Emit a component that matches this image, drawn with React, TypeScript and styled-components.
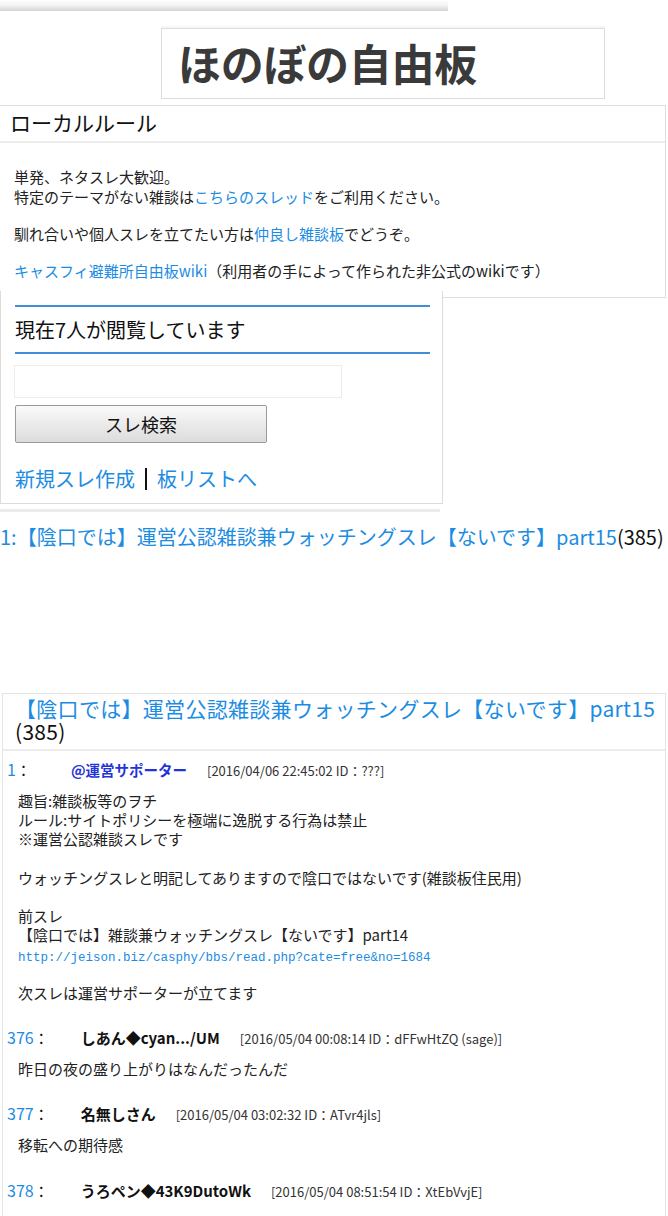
import React from "react";
import styled, { createGlobalStyle } from "styled-components";

const GlobalStyle = createGlobalStyle`
  html, body {
    margin: 0;
    padding: 0;
    background: #fff;
  }
  body {
    font-family: "Noto Sans CJK JP", "Noto Sans", sans-serif;
    color: #222;
  }
`;

const BLUE = "#1c8ce3";

const Page = styled.div`
  width: 668px;
  min-height: 1216px;
  overflow: hidden;
`;

const TopBar = styled.div`
  width: 448px;
  height: 11px;
  background: linear-gradient(#fff 0%, #f2f2f2 50%, #d4d4d4 100%);
`;

const TitleBox = styled.h1`
  box-sizing: border-box;
  width: 444px;
  height: 71px;
  margin: 17px 0 0 161px;
  padding: 0 0 0 16px;
  border: 1px solid #dcdcdc;
  box-shadow: 0 -2px 0 #f6f6f6;
  font-size: 43px;
  font-weight: 700;
  line-height: 66px;
  color: #3a3a3a;
  letter-spacing: -0.3px;
`;

const RuleBox = styled.section`
  box-sizing: border-box;
  width: 666px;
  margin-top: 6px;
  border: 1px solid #dedede;
  border-left: none;
`;

const RuleHeader = styled.div`
  height: 35px;
  padding-left: 10px;
  border-bottom: 2px solid #ececec;
  font-size: 21px;
  line-height: 33px;
  color: #111;
`;

const RuleBody = styled.div`
  padding: 24px 14px 16px;
  font-size: 15px;
  line-height: 20px;
  color: #222;
`;

const Para = styled.p`
  margin: 0 0 17px;
  &:last-child {
    margin-bottom: 0;
  }
`;

const Link = styled.a`
  color: ${BLUE};
  text-decoration: none;
`;

const Panel = styled.section`
  position: relative;
  box-sizing: border-box;
  width: 443px;
  margin-top: -7px;
  padding: 14px 12px 9px 14px;
  background: #fff;
  border: 1px solid #dcdcdc;
  border-top: none;
`;

const Viewers = styled.div`
  border-top: 2px solid #3f8fd8;
  border-bottom: 2px solid #3f8fd8;
  height: 45px;
  font-size: 20px;
  line-height: 46px;
  color: #111;
`;

const SearchInput = styled.input`
  display: block;
  box-sizing: border-box;
  width: 328px;
  height: 33px;
  margin: 11px 0 0 -1px;
  border: 1px solid #ececec;
  border-radius: 0;
  outline: none;
  background: #fff;
`;

const SearchButton = styled.button`
  display: block;
  box-sizing: border-box;
  width: 252px;
  height: 38px;
  margin-top: 7px;
  border: 1px solid #9a9a9a;
  border-radius: 2px;
  background: linear-gradient(#fafafa, #dcdcdc);
  font-family: "Noto Sans CJK JP", sans-serif;
  font-size: 18px;
  color: #111;
`;

const NavLinks = styled.div`
  display: flex;
  align-items: center;
  margin-top: 21px;
  height: 30px;
  font-size: 20px;
  line-height: 30px;
`;

const Sep = styled.span`
  display: inline-block;
  width: 2px;
  height: 22px;
  margin: 0 10px 0 10px;
  background: #111;
`;

const Divider = styled.div`
  width: 440px;
  height: 3px;
  margin-top: 5px;
  background: #ececec;
`;

const ThreadListItem = styled.div`
  margin-top: 12px;
  font-size: 20px;
  line-height: 26px;
  color: ${BLUE};
  white-space: nowrap;
`;

const Count = styled.span`
  color: #111;
`;

const ThreadBox = styled.section`
  box-sizing: border-box;
  width: 664px;
  margin: 143px 0 0 2px;
  border: 1px solid #e4e4e4;
  border-bottom: none;
  min-height: 530px;
`;

const ThreadTitle = styled.h2`
  margin: 0;
  padding: 3px 4px 6px 12px;
  border-bottom: 2px solid #ececec;
  font-size: 21px;
  font-weight: 400;
  line-height: 23px;
  color: ${BLUE};
  letter-spacing: 0.3px;
`;

const Post = styled.article`
  padding: 7px 0 17px;
`;

const PostHead = styled.div`
  display: flex;
  align-items: baseline;
  padding-left: 4px;
  line-height: 22px;
  white-space: nowrap;
`;

const PostNum = styled.span`
  font-size: 16px;
  color: ${BLUE};
`;

const Colon = styled.span`
  font-size: 15px;
  color: #111;
`;

const PostName = styled.span<{ $official?: boolean; $gap: number }>`
  margin-left: ${(p) => p.$gap}px;
  font-size: ${(p) => (p.$official ? 14.5 : 15)}px;
  font-weight: 700;
  color: ${(p) => (p.$official ? "#1f35d8" : "#111")};
`;

const PostDate = styled.span`
  margin-left: 20px;
  font-size: 13px;
  color: #333;
`;

const PostBody = styled.div`
  margin-top: 9px;
  padding-left: 15px;
  font-size: 15px;
  line-height: 19.2px;
  color: #222;
  white-space: pre-line;
`;

const UrlLink = styled(Link)`
  font-family: "Liberation Mono", monospace;
  font-size: 12.5px;
  line-height: 0;
`;

type PostData = {
  num: string;
  name: string;
  date: string;
  official?: boolean;
  gap: number;
  body: React.ReactNode;
};

const posts: PostData[] = [
  {
    num: "1",
    name: "@運営サポーター",
    date: "[2016/04/06 22:45:02 ID：???]",
    official: true,
    gap: 40,
    body: (
      <>
        {"趣旨:雑談板等のヲチ\nルール:サイトポリシーを極端に逸脱する行為は禁止\n※運営公認雑談スレです\n\nウォッチングスレと明記してありますので陰口ではないです(雑談板住民用)\n\n前スレ\n【陰口では】雑談兼ウォッチングスレ【ないです】part14\n"}
        <UrlLink href="#">http://jeison.biz/casphy/bbs/read.php?cate=free&amp;no=1684</UrlLink>
        {"\n\n次スレは運営サポーターが立てます"}
      </>
    ),
  },
  {
    num: "376",
    name: "しあん◆cyan.../UM",
    date: "[2016/05/04 00:08:14 ID：dFFwHtZQ (sage)]",
    gap: 32,
    body: "昨日の夜の盛り上がりはなんだったんだ",
  },
  {
    num: "377",
    name: "名無しさん",
    date: "[2016/05/04 03:02:32 ID：ATvr4jls]",
    gap: 32,
    body: "移転への期待感",
  },
  {
    num: "378",
    name: "うろペン◆43K9DutoWk",
    date: "[2016/05/04 08:51:54 ID：XtEbVvjE]",
    gap: 32,
    body: null,
  },
];

export default function App() {
  return (
    <Page>
      <GlobalStyle />
      <TopBar />
      <TitleBox>ほのぼの自由板</TitleBox>

      <RuleBox>
        <RuleHeader>ローカルルール</RuleHeader>
        <RuleBody>
          <Para>
            単発、ネタスレ大歓迎。
            <br />
            特定のテーマがない雑談は<Link href="#">こちらのスレッド</Link>をご利用ください。
          </Para>
          <Para>
            馴れ合いや個人スレを立てたい方は<Link href="#">仲良し雑談板</Link>でどうぞ。
          </Para>
          <Para>
            <Link href="#">キャスフィ避難所自由板wiki</Link>（利用者の手によって作られた非公式のwikiです）
          </Para>
        </RuleBody>
      </RuleBox>

      <Panel>
        <Viewers>現在7人が閲覧しています</Viewers>
        <SearchInput type="text" />
        <SearchButton type="button">スレ検索</SearchButton>
        <NavLinks>
          <Link href="#">新規スレ作成</Link>
          <Sep />
          <Link href="#">板リストへ</Link>
        </NavLinks>
      </Panel>
      <Divider />

      <ThreadListItem>
        1:【陰口では】運営公認雑談兼ウォッチングスレ【ないです】part15<Count>(385)</Count>
      </ThreadListItem>

      <ThreadBox>
        <ThreadTitle>
          【陰口では】運営公認雑談兼ウォッチングスレ【ないです】part15
          <br />
          <Count>(385)</Count>
        </ThreadTitle>
        {posts.map((p) => (
          <Post key={p.num}>
            <PostHead>
              <PostNum>{p.num}</PostNum>
              <Colon>：</Colon>
              <PostName $official={p.official} $gap={p.gap}>
                {p.name}
              </PostName>
              <PostDate>{p.date}</PostDate>
            </PostHead>
            {p.body && <PostBody>{p.body}</PostBody>}
          </Post>
        ))}
      </ThreadBox>
    </Page>
  );
}
